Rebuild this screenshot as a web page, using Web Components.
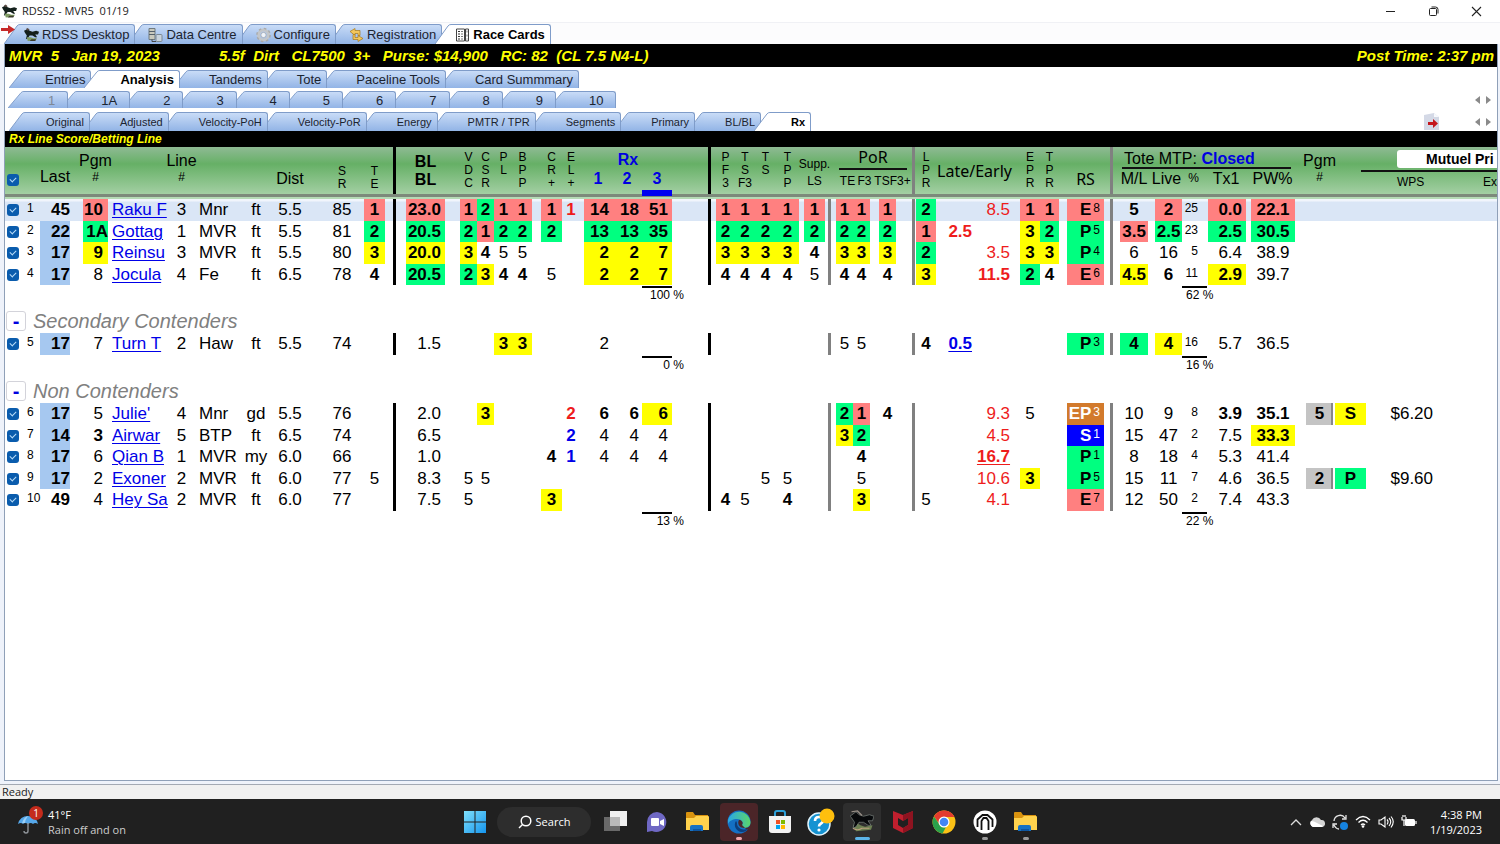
<!DOCTYPE html>
<html lang="en">
<head>
<meta charset="utf-8">
<title>RDSS2 - MVR5  01/19</title>
<style>
body{margin:0;background:#fff;font-family:"Liberation Sans",Arial,sans-serif;color:#000}
</style>
</head>
<body>
<app-window>
  <title-bar slot="title">RDSS2 - MVR5&nbsp; 01/19</title-bar>
  <tab-strip slot="main" class="main">
    <tab-item icon="horse">RDSS Desktop</tab-item>
    <tab-item icon="data">Data Centre</tab-item>
    <tab-item icon="gear">Configure</tab-item>
    <tab-item icon="reg">Registration</tab-item>
    <tab-item icon="cards" selected>Race Cards</tab-item>
  </tab-strip>
  <info-bar>
    <span>MVR  5   Jan 19, 2023</span>
    <span slot="detail">5.5f  Dirt   CL7500  3+   Purse: $14,900   RC: 82  (CL 7.5 N4-L)</span>
    <span slot="end">Post Time: 2:37 pm</span>
  </info-bar>
  <tab-strip class="views">
    <tab-item>Entries</tab-item><tab-item selected>Analysis</tab-item><tab-item>Tandems</tab-item><tab-item>Tote</tab-item><tab-item>Paceline Tools</tab-item><tab-item>Card Summmary</tab-item>
  </tab-strip>
  <tab-strip class="nums">
    <tab-item dim>1</tab-item><tab-item>1A</tab-item><tab-item>2</tab-item><tab-item>3</tab-item><tab-item>4</tab-item><tab-item>5</tab-item><tab-item>6</tab-item><tab-item>7</tab-item><tab-item>8</tab-item><tab-item>9</tab-item><tab-item>10</tab-item>
    <scroll-arrows slot="end"></scroll-arrows>
  </tab-strip>
  <tab-strip class="sub">
    <tab-item>Original</tab-item><tab-item>Adjusted</tab-item><tab-item>Velocity-PoH</tab-item><tab-item>Velocity-PoR</tab-item><tab-item>Energy</tab-item><tab-item>PMTR / TPR</tab-item><tab-item>Segments</tab-item><tab-item>Primary</tab-item><tab-item>BL/BL</tab-item><tab-item selected>Rx</tab-item>
    <app-icon slot="end" name="export" style="--w:15px;--h:17px"></app-icon>
    <scroll-arrows slot="end"></scroll-arrows>
  </tab-strip>
  <info-bar small><span>Rx Line Score/Betting Line</span></info-bar>
  <score-table></score-table>
  <status-bar slot="status">Ready</status-bar>
  <task-bar slot="taskbar"></task-bar>
</app-window>

<script>
const HORSE = '<path d="M0 3l4-2 2 2 3 1 4-1 3 1-1 3-3 0 2 3-2 0-3-2-3 0-2 3-2 1 1-4-2-3z" fill="#14201c"/><path d="M3 10l4 0 3 1 4 0-2 2-8 1z" fill="#7e9a62"/><path d="M2 1l2-1 2 2-2 1z" fill="#5a4a44"/><path d="M8 12h5l-1 2H6z" fill="#3c3c2c"/>';
const FOLDER = '<path d="M1 3q0-1 1-1h6l2 3h13v4H1z" fill="#d9930f"/><path d="M1 8l8 0 2-2h12q1 0 1 1v13H1z" fill="#ffd24d"/><path d="M5 21v-4q0-2 2-2h9q2 0 2 2v4z" fill="#1672c4"/><path d="M8 21v-2h8v2z" fill="#0e56a0"/>';
const ICONS = {
  horse: ['0 0 16 15', HORSE],
  data: ['0 0 15 15', '<path d="M1 1h6v11H1z" fill="#c9c9bd" stroke="#6f7a80"/><path d="M1 4h6M1 7h6" stroke="#55606a"/><rect x="8" y="7" width="6" height="7" rx="1" fill="#c8d3dd" stroke="#7c8994"/><path d="M4 12v2h4" stroke="#444" fill="none"/>'],
  gear: ['0 0 15 15', '<circle cx="7.5" cy="7.5" r="5" fill="none" stroke="#c3c6c9" stroke-width="3"/><circle cx="7.5" cy="7.5" r="6.6" fill="none" stroke="#a9a9a9" stroke-width="1.4" stroke-dasharray="2.6 2.6"/><circle cx="7.5" cy="7.5" r="2.6" fill="#eef3fa" stroke="#999" stroke-width=".6"/>'],
  reg: ['0 0 15 15', '<path d="M1 4l5-3v2h5v5H9V6H6v2z" fill="#f3c75c" stroke="#a8791b" stroke-width=".7"/><path d="M14 11l-5 3v-2H4V7h2v3h3V8z" fill="#f3c75c" stroke="#a8791b" stroke-width=".7"/>'],
  cards: ['0 0 15 15', '<path d="M1.500 1.500h8v12h-8zM10.500 1.500h3v12h-3z" fill="#fff" stroke="#444"/><path d="M3 4h2M3 6.500h2M3 9h2M3 11.500h2" stroke="#333"/><path d="M6 4h2M6 6.500h2M6 9h2M6 11.500h2M12 3v2M12 7v2M12 11v1" stroke="#777"/>'],
  export: ['0 0 15 17', '<path d="M0 2l10-2 5 4v13H0z" fill="#d4d9e6"/><path d="M10 0v4h5z" fill="#f7f9fc"/><path d="M4 9h5V6l5 4.500-5 4.500v-3H4z" fill="#c4171c"/>'],
  arrow: ['0 0 14 9', '<path d="M0 3h7V0l7 4.500L7 9V6H0z" fill="#c62828"/>'],
  win: ['0 0 22 22', '<defs><linearGradient id="a" x1="0" y1="0" x2="1" y2="1"><stop stop-color="#7fe0fb"/><stop offset="1" stop-color="#1595ee"/></linearGradient></defs><path d="M0 0h10.500v10.500H0zM11.500 0H22v10.500H11.500zM0 11.500h10.500V22H0zM11.500 11.500H22V22H11.500z" fill="url(#a)"/>'],
  view: ['0 0 23 21', '<rect x="6" y="0" width="17" height="15" fill="#f1f1f1"/><rect x="0" y="6" width="16" height="14" fill="#777" opacity=".85"/><rect x="6" y="6" width="10" height="9" fill="#b9b9b9"/>'],
  chat: ['0 0 22 22', '<path d="M11 1a10 10 0 1 1-5 19l-5 1V11A10 10 0 0 1 11 1z" fill="#6f68c4"/><rect x="5" y="7" width="8" height="8" rx="1" fill="#fff"/><path d="M14 10l4-2v7l-4-2z" fill="#fff"/>'],
  folder: ['0 0 25 23', FOLDER],
  edge: ['0 0 24 24', '<defs><linearGradient id="e" x1="0" y1="0" x2="1" y2="0"><stop stop-color="#2aa7e6"/><stop offset="1" stop-color="#5ad66a"/></linearGradient></defs><circle cx="12" cy="12" r="11.500" fill="#1470c4"/><path d="M1 10A11.500 11.500 0 0 1 23.500 12c0 4-3 6-6.500 6-3 0-3-2-2-3 2-3-1-6-5-6-4 0-8 2-9 5z" fill="url(#e)"/><path d="M9 11c-3 4 0 11 6 11 3 0 5-2 6-3-3 1-10 1-11-5 0-1 0-2-1-3z" fill="#0c3f7e"/><path d="M15 15c2-3-1-5-3-5-2 3 0 8 5 8 3 0 5-1 6-2v4l-4-1z" fill="#4b2a2e"/>'],
  store: ['0 0 24 24', '<path d="M7 6V3q0-2 2-2h6q2 0 2 2v3" fill="none" stroke="#2b9fd8" stroke-width="2"/><path d="M1 6h22v14q0 3-3 3H4q-3 0-3-3z" fill="#f2f2f2"/><path d="M8 10h4v4H8z" fill="#f25022"/><path d="M13 10h4v4h-4z" fill="#7fba00"/><path d="M8 15h4v4H8z" fill="#00a4ef"/><path d="M13 15h4v4h-4z" fill="#ffb900"/>'],
  help: ['0 0 28 28', '<circle cx="12" cy="16" r="11" fill="#1593d2" stroke="#dff3fc" stroke-width="1.500"/><path d="M8 13q0-4 4-4t4 3.500q0 2-2 3t-2 3" fill="none" stroke="#fff" stroke-width="2.600"/><circle cx="12" cy="22" r="1.600" fill="#fff"/><circle cx="20" cy="8" r="7.500" fill="#ffbf0d"/>'],
  bighorse: ['0 0 16 15', '<path d="M2 10q3-2 5 0l3 1 5-1-1 3-10 1z" fill="#6d8052"/><path d="M0 4l4-3 2 2 3 1 4-1 3 1-1 3-3 0 2 3-2 0-3-2-3 0-2 3-2 1 1-4-2-3z" fill="#07090b" stroke="#8c9690" stroke-width=".4"/><path d="M2 12q3 2 6 0l5 0" stroke="#b9a07c" fill="none" stroke-width=".8"/><path d="M1 1l4-.5 3 3" stroke="#999088" fill="none" stroke-width=".8"/>'],
  shield: ['0 0 20 23', '<path d="M0 1l10 4 10-4v17l-10 5-10-5zM5 8v7l5 3 5-3V8l-5 3z" fill="#c01f2e" fill-rule="evenodd"/><path d="M10 5l10-4v17l-10 5v-5l5-3V8l-5 3z" fill="#8e1320"/>'],
  chrome: ['0 0 24 24', '<circle cx="12" cy="12" r="11.500" fill="#fbc116"/><path d="M2 6.500A11.500 11.500 0 0 1 22.500 7H12a5 5 0 0 0-4.500 7z" fill="#e33b2e"/><path d="M2 6.500l5.500 8A5 5 0 0 0 14 17l-3.500 6.500A11.500 11.500 0 0 1 2 6.500z" fill="#2ba24c"/><circle cx="12" cy="12" r="5.500" fill="#fff"/><circle cx="12" cy="12" r="4.300" fill="#4285f4"/>'],
  gate: ['0 0 24 24', '<circle cx="12" cy="12" r="11.500" fill="#fff"/><path d="M4.500 17V9.500L9.500 5h5l5 4.500V17M8.500 20v-9l2-3h3l2 3v9" fill="none" stroke="#111" stroke-width="1.800"/>'],
  umbrella: ['0 0 20 20', '<path d="M0 10Q2 2 10 2t10 8q-3-2-5 0-2-2-5 0-3-2-5 0-2-2-5 0z" fill="#56a8ea"/><path d="M4 9Q6 3 10 2q-3 4-3 7z" fill="#9dd0f7"/><path d="M10 9v8q0 2-2 2t-2-2" fill="none" stroke="#8f9499" stroke-width="1.400"/>'],
  search: ['0 0 14 14', '<circle cx="8" cy="6" r="4.800" fill="none" stroke="#fff" stroke-width="1.500"/><path d="M4.500 9.500L1 13" stroke="#fff" stroke-width="1.500"/>'],
  up: ['0 0 12 8', '<path d="M1 7l5-5 5 5" fill="none" stroke="#ddd" stroke-width="1.300"/>'],
  cloud: ['0 0 16 11', '<path d="M4 11a4 4 0 0 1-1-7 5 5 0 0 1 9 0 3.500 3.500 0 0 1 1 7z" fill="#d4d4d4"/><path d="M4 11a4 4 0 0 1-2-6q3 0 6 2l6 3-1 1z" fill="#fff"/>'],
  sync: ['0 0 16 16', '<path d="M2 7a6 6 0 0 1 11-3M14 1v4h-4M1 14v-4h4M2 11q2 4 5 4" fill="none" stroke="#e5e5e5" stroke-width="1.300"/><circle cx="12" cy="12" r="4" fill="#1683e0"/>'],
  wifi: ['0 0 16 13', '<path d="M1 5q7-7 14 0M3.500 7.500q4.500-4.500 9 0M6 10q2-2 4 0" fill="none" stroke="#fff" stroke-width="1.300"/><circle cx="8" cy="11.500" r="1.300" fill="#fff"/>'],
  sound: ['0 0 16 13', '<path d="M1 5v4h2l4 3V2L3 5zM9 4.500q2 2 0 5M11 3q3.500 3.500 0 8M13 1.500q4.500 5 0 11" fill="none" stroke="#fff" stroke-width="1.100"/>'],
  battery: ['0 0 16 13', '<rect x="4" y="4" width="10" height="7" rx="1.500" fill="#fff"/><path d="M15 6v3M1 2v3h4V2M3 5v6M2 0v2M4 0v2" stroke="#fff" fill="none" stroke-width="1.200"/>'],
  min: ['0 0 11 11', '<path d="M1 5.500h9" stroke="#222"/>'],
  max: ['0 0 11 11', '<rect x="1.500" y="2.500" width="7" height="7" rx="1" fill="none" stroke="#222"/><path d="M3.500 1h4q2.500 0 2.500 2.500v4" fill="none" stroke="#222"/>'],
  close: ['0 0 11 11', '<path d="M1 1l9 9M10 1l-9 9" stroke="#222" stroke-width="1.100"/>'],
  left: ['0 0 5 8', '<path d="M5 0v8L0 4z" fill="#8a8a8a"/>'],
  right: ['0 0 5 8', '<path d="M0 0v8l5-4z" fill="#8a8a8a"/>']
};
const define = (name, html, init) => customElements.define(name, class extends HTMLElement {
  constructor() {
    super();
    const t = document.createElement('template');
    t.innerHTML = html;
    this.attachShadow({mode: 'open'}).append(t.content.cloneNode(true));
  }
  connectedCallback() { if (init) init(this, this.shadowRoot); }
});

define('app-icon', '<style>:host{display:inline-block;flex:none;width:var(--w,15px);height:var(--h,15px)}svg{display:block;width:100%;height:100%}</style>', (el, root) => {
  const [box, body] = ICONS[el.getAttribute('name')];
  if (!root.querySelector('svg')) root.innerHTML += `<svg viewBox="${box}" aria-hidden="true">${body}</svg>`;
});

define('app-window', `<style>
:host{display:flex;flex-direction:column;min-height:100vh;background:#fff}
.tabs{position:relative;padding-left:4px;background:#fcfcfd;border-top:1px solid #f0f1f5}
.tabs app-icon{position:absolute;left:1px;top:2px;z-index:40}
.frame{flex:1;display:flex;flex-direction:column;background:#eef2fa;padding:0 2px 3px 4px;border-bottom:1px solid #a3a9b3}
.pane{flex:1;display:flex;flex-direction:column;background:#fff;border:1px solid #8fa0b8;border-top:0;overflow:hidden;min-width:0}
</style>
<slot name="title"></slot>
<div class="tabs"><app-icon name="arrow" style="--w:14px;--h:9px"></app-icon><slot name="main"></slot></div>
<div class="frame"><main class="pane"><slot></slot></main></div>
<slot name="status"></slot><slot name="taskbar"></slot>`);

define('title-bar', `<style>
:host{display:flex;align-items:center;height:22px;padding-left:2px;gap:5px;font:11px/20px "Open Sans","Noto Sans",sans-serif;color:#222}
span{flex:1}
button{width:43px;height:20px;border:0;background:none;padding:0;display:grid;place-items:center}
nav{display:flex;padding-right:2px}
</style><app-icon name="horse"></app-icon><span><slot></slot></span>
<nav><button aria-label="Minimize"><app-icon name="min" style="--w:11px;--h:11px"></app-icon></button><button aria-label="Restore"><app-icon name="max" style="--w:11px;--h:11px"></app-icon></button><button aria-label="Close"><app-icon name="close" style="--w:11px;--h:11px"></app-icon></button></nav>`);

define('tab-strip', `<style>
:host{display:flex;align-items:center;font-size:13px;--h:18px;--pl:36px;--pr:6px;padding-left:4px}
:host(.main){--h:20px;--pl:20px;padding:1px 0 0}
:host(.views){padding-top:3px}
:host(.nums){padding:3px 0 0 3px;--h:17px;--pl:40px;--pr:13px}
:host(.sub){padding-top:4px;--h:19px;--pl:37px;font-size:11px}
.end{margin-left:auto;display:flex;align-items:center;gap:36px;padding-right:6px}
</style><slot></slot><div class="end"><slot name="end"></slot></div>`, el => {
  const tabs = [...el.querySelectorAll('tab-item')];
  tabs.forEach((t, i) => { t.style.zIndex = t.hasAttribute('selected') ? 30 : 20 - i; });
});

define('tab-item', `<style>
:host{display:block;position:relative;margin-left:-7px;--a:#c9dcf7;--b:#92b4e6}
:host(:first-child){margin-left:0}
:host([selected]){--a:#fff;--b:#fff;font-weight:bold}
button{display:flex;align-items:stretch;height:var(--h);padding:0;border:0;background:none;font:inherit;color:#1c2430}
:host([selected]) button{color:#000}
:host([dim]) button{color:#7e8896}
svg{width:16px;height:100%;flex:none;display:block}
.body{display:flex;align-items:center;gap:3px;box-sizing:border-box;border:1px solid #7f9cc9;border-width:1px 1px 0 0;border-radius:0 3px 0 0;background:linear-gradient(var(--a),var(--b));padding:0 calc(var(--pr) - 1px) 0 calc(var(--pl) - 16px);white-space:nowrap}
</style>
<button role="tab"><svg viewBox="0 0 16 20" preserveAspectRatio="none" aria-hidden="true"><defs><linearGradient id="g" x2="0" y2="1"><stop style="stop-color:var(--a)"/><stop offset="1" style="stop-color:var(--b)"/></linearGradient></defs><path d="M0 20L13 2Q14 .5 16 .5V20z" fill="url(#g)"/><path d="M0 20L13 2Q14 .5 16 .5" fill="none" stroke="#7f9cc9"/></svg><span class="body"><slot></slot></span></button>`, (el, root) => {
  const name = el.getAttribute('icon');
  if (name && !root.querySelector('app-icon')) {
    const i = document.createElement('app-icon');
    i.setAttribute('name', name);
    root.querySelector('.body').prepend(i);
  }
});

define('scroll-arrows', `<style>:host{display:flex;gap:6px}button{border:0;background:none;padding:0;width:5px;height:8px;display:block}app-icon{display:block}</style>
<button aria-label="Scroll left"><app-icon name="left" style="--w:5px;--h:8px"></app-icon></button><button aria-label="Scroll right"><app-icon name="right" style="--w:5px;--h:8px"></app-icon></button>`);

define('info-bar', `<style>
:host{display:flex;align-items:center;height:23px;background:#000;color:#ff0;font:italic bold 15px/22px "Liberation Sans",Arial,sans-serif;white-space:pre;padding:0 3px 0 4px}
:host([small]){height:16px;font-size:12px;line-height:16px}
.first{flex:none;min-width:210px}.end{margin-left:auto}
</style><div class="first"><slot></slot></div><div><slot name="detail"></slot></div><div class="end"><slot name="end"></slot></div>`, el => {
  [...el.childNodes].filter(n => n.nodeType === 3).forEach(n => n.remove());
});

/* Column key and width in px; "-" is a spacer, "|" a black rule, ":" a grey rule. */
const COLS = [['chk',19],['num',16],['last',30],['-',13],['pgm',25],['name',64],['line',19],['track',49],['cond',32],['dist',36],['-',12],['sr',44],['te',21],['-',8],['|',3],['-',10],['bl',39],['-',15],['vdc',17],['csr',17],['pl',19],['bpp',19],['-',9],['cr',21],['el',18],['-',4],['rx1',28],['rx2',30],['rx3',30],['-',36],['|',3],['-',5],['pf3',19],['tsf3',20],['ts',21],['tpp',23],['-',5],['supp',21],['-',3],[':',3],['-',5],['pte',17],['pf',17],['-',9],['ptsf',17],['-',16],[':',3],['-',1],['lpr',20],['late',39],['early',38],['-',7],['epr',20],['tpr',19],['-',8],['rs',37],['-',6],[':',3],['-',7],['ml',28],['-',7],['live',27],['pct',17],['-',9],['tx',38],['-',5],['pw',44],['-',11],['fin',27],['-',2],['pos',31],['wps',71],['ex',0]];
/* Values follow the keyed columns after the tick box; a letter before ":" sets the tone. */
const GROUPS = [
  {rows: [
    '1|b:45|r:10|Raku F|3|Mnr|ft|5.5|85|r:1|r:23.0|r:1|g:2|r:1|r:1|r:1|R:1|r:14|r:18|r:51|r:1|r:1|r:1|r:1|r:1|r:1|r:1|r:1|g:2||e:8.5|r:1|r:1|r:E8|b:5|r:2|25|r:0.0|r:22.1||||',
    '2|l:22|g:1A|Gottag|1|MVR|ft|5.5|81|g:2|g:20.5|g:2|r:1|g:2|g:2|g:2||g:13|g:13|g:35|g:2|g:2|g:2|g:2|g:2|g:2|g:2|g:2|r:1|R:2.5||y:3|g:2|g:P5|r:3.5|g:2.5|23|g:2.5|g:30.5||||',
    '3|l:17|y:9|Reinsu|3|MVR|ft|5.5|80|y:3|y:20.0|y:3|b:4|5|5|||y:2|y:2|y:7|y:3|y:3|y:3|y:3|b:4|y:3|y:3|y:3|g:2||e:3.5|y:3|y:3|g:P4|6|16|5|6.4|38.9||||',
    '4|l:17|8|Jocula|4|Fe|ft|6.5|78|b:4|g:20.5|g:2|y:3|b:4|b:4|5||y:2|y:2|y:7|b:4|b:4|b:4|b:4|5|b:4|b:4|b:4|y:3||R:11.5|g:2|b:4|r:E6|y:4.5|b:6|11|y:2.9|39.7||||'], rx: '100', live: '62'},
  {title: 'Secondary Contenders', rows: [
    '5|l:17|7|Turn T|2|Haw|ft|5.5|74||1.5|||y:3|y:3|||2||||||||5|5||b:4|U:0.5||||g:P3|g:4|y:4|16|5.7|36.5||||'], rx: '0', live: '16'},
  {title: 'Non Contenders', rows: [
    "6|l:17|5|Julie'|4|Mnr|gd|5.5|76||2.0||y:3||||R:2|b:6|b:6|y:6||||||g:2|r:1|b:4|||e:9.3|5||o:EP3|10|9|8|b:3.9|b:35.1|s:5|y:S|$6.20|",
    '7|l:14|b:3|Airwar|5|BTP|ft|6.5|74||6.5||||||B:2|4|4|4||||||y:3|g:2||||e:4.5|||n:S1|15|47|2|7.5|y:33.3||||',
    '8|l:17|6|Qian B|1|MVR|my|6.0|66||1.0|||||b:4|B:1|4|4|4|||||||b:4||||V:16.7|||g:P1|8|18|4|5.3|41.4||||',
    '9|l:17|2|Exoner|2|MVR|ft|6.0|77|5|8.3|5|5||||||||||5|5|||5||||e:10.6|y:3||g:P5|15|11|7|4.6|36.5|s:2|g:P|$9.60|',
    '10|b:49|4|Hey Sa|2|MVR|ft|6.0|77||7.5|5||||y:3|||||b:4|5||b:4|||y:3||5||e:4.1|||r:E7|12|50|2|7.4|43.3||||'], rx: '13', live: '22'}
];
const stack = (t, low) => `<div class="h${low ? ' low' : ''}">${t.split(' ').map(x => `<span>${x}</span>`).join('')}</div>`;
const th = (html, span = 1, cls = '') => `<th colspan="${span}" class="${cls}">${html}</th>`;
const gap = (n = 1) => `<td colspan="${n}"></td>`;
const HEAD = [
  th('<input type="checkbox" checked aria-label="Select all">', 1, 'all'), gap(), th('<div class="w mid">Last</div>'), gap(),
  th('<div class="w top">Pgm<small>#</small></div>'), gap(), th('<div class="w top">Line<small>#</small></div>'), gap(2),
  th('<div class="w dst">Dist</div>'), gap(), th(stack('S R', 1)), th(stack('T E', 1)), gap(), '<td class="k"></td>', gap(),
  th('<div class="w bold">BL<br>BL</div>'), gap(), th(stack('V D C')), th(stack('C S R')), th(stack('P L')), th(stack('B P P')), gap(),
  th(stack('C R +')), th(stack('E L +')), gap(),
  th('<div class="rx"><b>Rx</b><div><b>1</b><b>2</b><b class="on">3</b></div></div>', 3), gap(), '<td class="k"></td>', gap(),
  th(stack('P F 3')), th(stack('T S F3')), th(stack('T S')), th(stack('T P P')), gap(),
  th('<div class="h sup"><span>Supp.</span><span>LS</span></div>'), gap(3),
  th('<div class="por"><div class="t">PoR</div><div class="sub"><span>TE</span><span>F3</span><span>TSF3+</span></div></div>', 5),
  '<td class="s"></td>', gap(), th(stack('L P R')), th('<div class="ui le">Late/Early</div>', 2), gap(),
  th(stack('E P R')), th(stack('T P R')), gap(), th('<div class="ui style">RS</div>'), gap(), '<td class="s"></td>', gap(),
  th('<div class="tote"><div class="t">Tote MTP: <b>Closed</b></div><div class="sub"><span>M/L</span><span>Live</span><small>%</small><span>Tx1</span><span>PW%</span></div></div>', 8), gap(),
  th('<div class="w top">Pgm<small>#</small></div>'), gap(2),
  th('<div class="mut"><button>Mutuel Pri</button><div><span>WPS</span><span>Ex</span></div></div>', 2)
].join('');

function cell(key, raw, num) {
  const m = /^([a-zA-Z]):(.*)$/.exec(raw), tone = m ? m[1] : '';
  let text = m ? m[2] : raw;
  if (key === 'name') text = `<a href="#horse-${num}">${text}</a>`;
  if (key === 'rs' && text) text = `${text.slice(0, -1)}<i>${text.slice(-1)}</i>`;
  return `<td class="${key}${tone ? ' ' + tone : ''}">${text}</td>`;
}
function row(data) {
  const vals = data.split('|'), num = vals[0];
  let k = 0;
  return '<tr class="row">' + COLS.map(([key]) => {
    if (key === '-') return '<td></td>';
    if (key === '|') return '<td class="k"></td>';
    if (key === ':') return '<td class="s"></td>';
    if (key === 'chk') return `<td class="chk"><input type="checkbox" checked aria-label="Select ${num}"></td>`;
    return cell(key, vals[k++] || '', num);
  }).join('') + '</tr>';
}
const at = key => COLS.findIndex(c => c[0] === key);
function group(g) {
  const a = at('rx3'), b = at('pct');
  const title = g.title ? `<tr class="title"><th colspan="${COLS.length}"><div><button aria-label="Collapse ${g.title}">-</button>${g.title}</div></th></tr>` : '';
  const sum = `<tr class="sum"><td colspan="${a}"></td><td colspan="2"><hr><p>${g.rx} %</p></td><td colspan="${b - a - 2}"></td><td colspan="3" class="odds"><hr><p>${g.live} %</p></td><td colspan="${COLS.length - b - 3}"></td></tr>`;
  return `<tbody>${title}</tbody><tbody>${g.rows.map(row).join('')}</tbody><tbody>${sum}</tbody>`;
}

define('score-table', `<style>
:host{display:block;flex:1;overflow:hidden}
table{width:100%;table-layout:fixed;border-collapse:collapse;font-size:17px;line-height:21px}
td,th{padding:0;font-weight:normal;white-space:nowrap;text-align:center}
thead tr:first-child{height:47px;background:linear-gradient(#8fba94,#66b066 36%,#a3cfa3)}
thead th,thead td{vertical-align:top}
thead tr.edge{height:5px;background:linear-gradient(#7d8a7b 0 3px,#b5dab5 3px)}
.edge td{height:5px;line-height:0}
input{appearance:none;box-sizing:border-box;display:block;position:relative;width:12px;height:12px;margin:0 0 0 2px;border-radius:3px;background:#0a5cad}
input::after{content:"";position:absolute;left:3px;top:3px;width:5px;height:3px;border:1px solid #b9dcf8;border-width:0 0 1px 1px;transform:rotate(-45deg)}
.all{padding-top:27px}
.w,.h{display:flex;flex-direction:column;align-items:center;font-size:16px;line-height:18px}
.h{font-size:12px;line-height:13px;padding-top:4px}.low{padding-top:18px}
.top{padding-top:5px}.top small{font-size:12px;line-height:14px}
.mid{padding-top:21px}.dst{padding-top:23px}
.bold{font-weight:bold;padding-top:6px}
.sup{padding-top:9px;line-height:17px}
.rx{position:relative;font-size:16px;line-height:19px;padding-top:3px;color:#0000e0}
.rx div{display:grid;grid-template-columns:28px 30px 30px}
.rx .on::after{content:"";position:absolute;right:0;top:43px;width:30px;height:6px;background:#0000f0}
.ui,.por .t{font:16px/20px "Noto Sans","Open Sans",sans-serif}
.le{padding-top:14px}.style{padding-top:22px}
.por{margin:0 -11px 0 3px;font-size:12px}
.por .t{border-bottom:2px solid #111;line-height:21px;width:68px}
.por .sub{display:grid;grid-template-columns:17px 17px 39px;line-height:22px}
.tote{font-size:16px}
.tote .t{margin:0 4px 0 2px;padding:4px 2px 0;border-bottom:2px solid #111;text-align:left;line-height:16px}
.tote .t b{color:#0000e0}
.tote .sub{display:grid;grid-template-columns:28px 37px 17px 48px 45px;line-height:19px}
.tote small{font-size:12px}
.mut{font-size:12px;margin-left:-5px}
.mut button{display:block;box-sizing:border-box;width:calc(100% - 36px);margin:3px 0 0 36px;height:18px;border:0;border-radius:3px 0 0 3px;background:#fff;font:bold 14px/18px "Liberation Sans",Arial,sans-serif;text-align:left;padding:0 0 0 29px;white-space:nowrap;overflow:hidden}
.mut div{margin-top:2px;border-top:2px solid #111;display:flex;justify-content:space-between;padding:0 0 0 36px;line-height:20px}
.row{height:21px}.row:nth-child(odd){height:22px}
.row td{vertical-align:top}.row .chk{vertical-align:middle}
tbody:nth-of-type(2) .row:first-child{background:linear-gradient(#f1f5fc 0 2px,#dae6f6 3px)}
td.k{background:#000}td.s{background:#808080}
.num{font-size:12px;line-height:18px;padding-left:3px}
.name{padding-left:4px}.track{padding-left:8px}
.num,.name,.track{text-align:left}
.last,.bl,.rx1,.rx2,.rx3,.late,.early,.rs,.pct,.tx,.pgm,.wps{text-align:right}
.pgm{padding-right:5px}.pgm.g{padding-right:0}
.bl,.tx,.rx3,.wps,.rs{padding-right:4px}.rx1,.rx2,.late,.early{padding-right:3px}
.name a{color:#0000e8;text-underline-offset:2px;text-decoration-thickness:1px}
.pct{font-size:12px;line-height:18px;padding-right:1px}
.rs i{display:inline-block;font:12px/12px "Liberation Sans",Arial,sans-serif;vertical-align:3px;padding-left:2px}
.r,.g,.y,.b,.l,.R,.B,.U,.V,.o,.n,.fin{font-weight:bold}
.r{background:#ff8080}.g{background:#00ff80}.y{background:#ff0}.l{background:#a6c8f0}
.o{background:#d27a2c;color:#fff}.n{background:#00f;color:#fff}
td.fin.s{background:#c4c4c4;box-shadow:inset -2px 0 #888}
.e,.R,.V{color:#ee1c1c}.B,.U{color:#0000e8}.U,.V{text-decoration:underline;text-underline-offset:2px}
.title th{height:24px}.title div{display:flex;align-items:center;gap:7px;padding-left:1px;font:italic 20px/24px "Liberation Sans",Arial,sans-serif;color:#808080}
.title button{width:20px;height:20px;padding:0;border:1px solid #d3d3da;border-radius:3px;background:#fff;color:#0000e0;font:bold 20px/14px "Liberation Sans",Arial,sans-serif}
.sum td{height:24px;vertical-align:top;font-size:12px;line-height:14px}
hr{margin:1px 0 0;border:0;height:2px;background:#000;width:30px}.odds hr{width:25px}
p{margin:0;text-align:right;padding-right:24px}
.odds p{text-align:left;padding:0 0 0 4px}
</style><table></table>`, (el, root) => {
  root.querySelector('table').innerHTML =
    `<colgroup>${COLS.map(c => c[1] ? `<col style="width:${c[1]}px">` : '<col>').join('')}</colgroup>` +
    `<thead><tr>${HEAD}</tr><tr class="edge"><td colspan="${COLS.length}"></td></tr></thead>` + GROUPS.map(group).join('');
});

define('status-bar', `<style>:host{display:block;background:#f0f0f0;font:11px/14px "Open Sans","Noto Sans",sans-serif;color:#222;padding-left:2px}</style><slot></slot>`);

define('task-icon', `<style>
:host{display:block;width:41px}
button{position:relative;display:grid;place-items:center;width:38px;height:38px;margin:0 auto;padding:0;border:0;border-radius:4px;background:var(--bg,none)}
:host([dot]) button::after{content:"";position:absolute;bottom:1px;left:16px;width:6px;height:3px;border-radius:2px;background:#9a9a9a}
:host([dot=pink]) button::after{background:#f0a5aa}
:host([dot=wide]) button::after{left:12px;width:15px;background:#5cb4e8}
</style><button></button>`, (el, root) => {
  const [name, w, h] = el.getAttribute('kind').split(' ');
  const button = root.querySelector('button');
  button.setAttribute('aria-label', name);
  button.innerHTML = `<app-icon name="${name}" style="--w:${w}px;--h:${h}px"></app-icon>`;
});

define('task-bar', `<style>
:host{display:grid;grid-template-columns:1fr auto 1fr;align-items:center;height:45px;background:#202020;color:#fff;font:11px/15px "Open Sans","Noto Sans",sans-serif}
.weather{display:flex;align-items:center;gap:10px;padding-left:18px}
.weather div{position:relative;padding-top:4px;height:20px}
.weather b{position:absolute;left:11px;top:-4px;width:14px;height:14px;border-radius:7px;background:#c42b1c;font:10px/14px "Open Sans",sans-serif;text-align:center}
.weather span span{display:block;color:#ccc}
.mid{display:flex;align-items:center}
.search{display:flex;align-items:center;justify-content:center;gap:4px;width:94px;height:30px;margin:0 4px 0 2px;border:0;border-radius:15px;background:#2d2d2d;color:#fff;font:inherit}
.tray{display:flex;align-items:center;justify-content:flex-end;gap:7px;padding-right:18px}
.tray span{text-align:right;padding-left:6px}
</style>
<div class="weather"><div><app-icon name="umbrella" style="--w:20px;--h:20px"></app-icon><b>1</b></div><span>41°F<span>Rain off and on</span></span></div>
<div class="mid">
<task-icon kind="win 22 22"></task-icon>
<button class="search"><app-icon name="search" style="--w:14px;--h:14px"></app-icon>Search</button>
<task-icon kind="view 23 21"></task-icon><task-icon kind="chat 22 22"></task-icon><task-icon kind="folder 25 23"></task-icon>
<task-icon kind="edge 24 24" dot="pink" style="--bg:#4b2528"></task-icon><task-icon kind="store 24 24"></task-icon><task-icon kind="help 28 28"></task-icon>
<task-icon kind="bighorse 24 23" dot="wide" style="--bg:#2e2e2e"></task-icon><task-icon kind="shield 20 23"></task-icon><task-icon kind="chrome 24 24"></task-icon>
<task-icon kind="gate 24 24" dot></task-icon><task-icon kind="folder 25 23" dot></task-icon>
</div>
<div class="tray"><app-icon name="up" style="--w:12px;--h:8px"></app-icon><app-icon name="cloud" style="--w:16px;--h:11px"></app-icon><app-icon name="sync" style="--w:16px;--h:16px"></app-icon><app-icon name="wifi" style="--w:16px;--h:13px"></app-icon><app-icon name="sound" style="--w:16px;--h:13px"></app-icon><app-icon name="battery" style="--w:16px;--h:13px"></app-icon><span>4:38 PM<br>1/19/2023</span></div>`);
</script>
</body>
</html>
